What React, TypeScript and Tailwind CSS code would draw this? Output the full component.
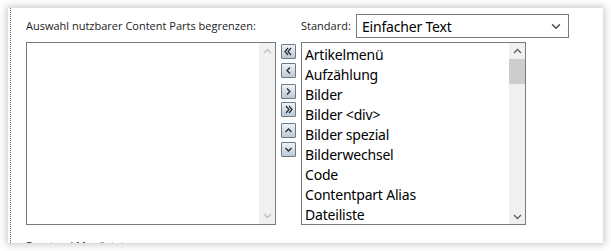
import React from "react";

const Chev = ({ dir, color, size = 9 }: { dir: "up" | "down"; color: string; size?: number }) => (
  <svg width={size} height={size} viewBox="0 0 9 9">
    {dir === "up" ? (
      <polyline points="1,6 4.5,2.5 8,6" fill="none" stroke={color} strokeWidth="1.4" />
    ) : (
      <polyline points="1,3 4.5,6.5 8,3" fill="none" stroke={color} strokeWidth="1.4" />
    )}
  </svg>
);

const Btn = ({ kind }: { kind: string }) => {
  let g: React.ReactNode = null;
  const c = "#1f2a33";
  if (kind === "ll")
    g = (
      <>
        <polyline points="6,3 3,6.5 6,10" fill="none" stroke={c} strokeWidth="1.2" />
        <polyline points="9,3 6,6.5 9,10" fill="none" stroke={c} strokeWidth="1.2" />
      </>
    );
  if (kind === "l") g = <polyline points="8,3.5 5,6.5 8,9.5" fill="none" stroke={c} strokeWidth="1.3" />;
  if (kind === "r") g = <polyline points="5,3.5 8,6.5 5,9.5" fill="none" stroke={c} strokeWidth="1.3" />;
  if (kind === "rr")
    g = (
      <>
        <polyline points="4,3 7,6.5 4,10" fill="none" stroke={c} strokeWidth="1.2" />
        <polyline points="7,3 10,6.5 7,10" fill="none" stroke={c} strokeWidth="1.2" />
      </>
    );
  if (kind === "u") g = <polyline points="3.5,8 6.5,5 9.5,8" fill="none" stroke={c} strokeWidth="1.3" />;
  if (kind === "d") g = <polyline points="3.5,5 6.5,8 9.5,5" fill="none" stroke={c} strokeWidth="1.3" />;
  return (
    <div className="w-[15px] h-[15px] border border-[#6d7a84] rounded-[1px] bg-gradient-to-b from-[#eef3f7] to-[#bccad6] flex items-center justify-center">
      <svg width="13" height="13" viewBox="0 0 13 13">
        {g}
      </svg>
    </div>
  );
};

const items = [
  "Artikelmenü",
  "Aufzählung",
  "Bilder",
  "Bilder <div>",
  "Bilder spezial",
  "Bilderwechsel",
  "Code",
  "Contentpart Alias",
  "Dateiliste",
];

export default function App() {
  return (
    <div className="w-[611px] h-[251px] bg-white pt-[8px] pl-[8px]" style={{ fontFamily: '"Open Sans", "Noto Sans", sans-serif' }}>
      <div className="w-[595px] h-[235px] bg-white shadow-[0_0_7px_2px_rgba(0,0,0,0.2)] overflow-hidden pl-[2px]">
        <div className="h-full border-l border-dotted border-[#4f6f6f] pl-[15px] pt-[6px]">
          <div className="flex items-center h-[24px]">
            <div className="w-[275px] text-[11px] text-[#222]">Auswahl nutzbarer Content Parts begrenzen:</div>
            <div className="w-[55px] text-[11px] text-[#222]">Standard:</div>
            <div className="w-[213px] h-[24px] border border-[#7a7a7a] flex items-center justify-between pl-[5px] pr-[7px]">
              <span className="text-[14px] text-black tracking-[-0.2px]" style={{ fontFamily: '"Noto Sans", sans-serif' }}>Einfacher Text</span>
              <Chev dir="down" color="#555" size={10} />
            </div>
          </div>
          <div className="flex mt-[4px]">
            <div className="w-[250px] h-[183px] border border-[#7a7a7a] flex justify-end">
              <div className="w-[16px] h-full bg-[#f0f0f0] flex flex-col justify-between items-center py-[4px]">
                <Chev dir="up" color="#c2c2c2" />
                <Chev dir="down" color="#c2c2c2" />
              </div>
            </div>
            <div className="ml-[5px] w-[15px] flex flex-col pt-[2px]">
              <Btn kind="ll" />
              <div className="mt-[4px]"><Btn kind="l" /></div>
              <div className="mt-[6px]"><Btn kind="r" /></div>
              <div className="mt-[3px]"><Btn kind="rr" /></div>
              <div className="mt-[6px]"><Btn kind="u" /></div>
              <div className="mt-[4px]"><Btn kind="d" /></div>
            </div>
            <div className="ml-[5px] w-[225px] h-[183px] border border-[#7a7a7a] flex">
              <div className="flex-1 pl-[3px] pt-[2px]" style={{ fontFamily: '"Noto Sans", sans-serif' }}>
                {items.map((t) => (
                  <div key={t} className="h-[20px] leading-[20px] text-[14px] tracking-[-0.2px] text-black whitespace-nowrap">
                    {t}
                  </div>
                ))}
              </div>
              <div className="w-[16px] h-full bg-[#f0f0f0] flex flex-col items-center">
                <div className="h-[16px] flex items-center justify-center">
                  <Chev dir="up" color="#606060" />
                </div>
                <div className="w-full h-[25px] bg-[#cdcdcd]" />
                <div className="flex-1" />
                <div className="h-[16px] flex items-center justify-center">
                  <Chev dir="down" color="#606060" />
                </div>
              </div>
            </div>
          </div>
          <div className="mt-[13px] text-[11px] text-[#222]">Frontend Menüstatus:</div>
        </div>
      </div>
    </div>
  );
}
